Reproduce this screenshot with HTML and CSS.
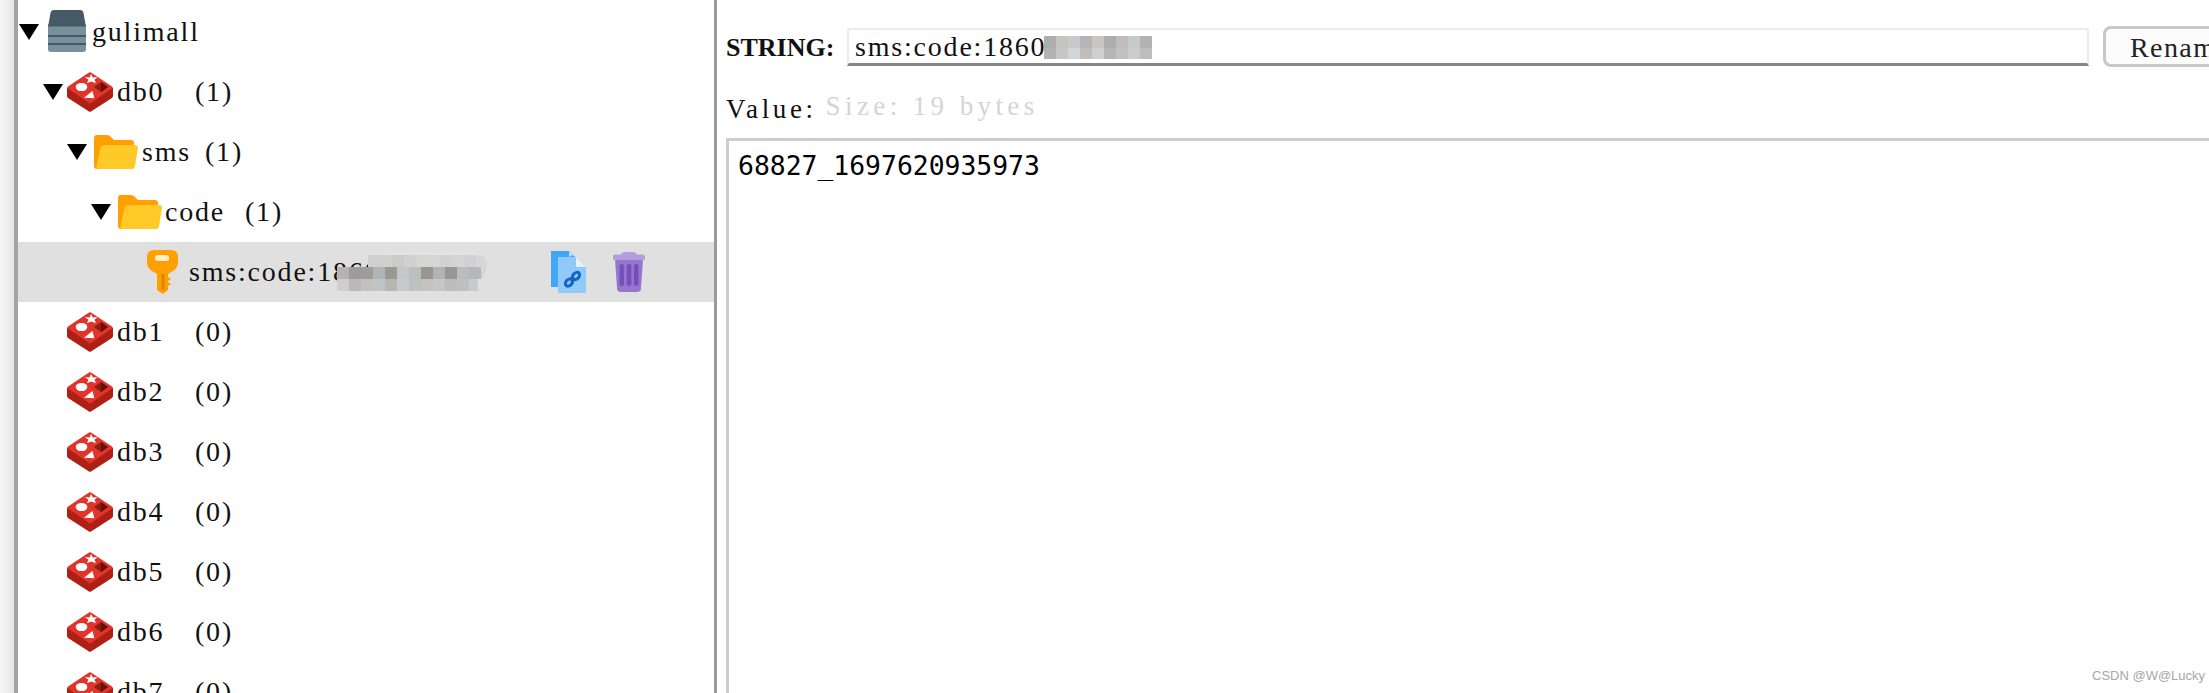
FILE: index.html
```html
<!DOCTYPE html>
<html lang="en">
<head>
<meta charset="utf-8">
<title>Redis key</title>
<link rel="stylesheet" href="styles.css">
</head>
<body>
<svg class="defs" width="0" height="0" aria-hidden="true">
  <symbol id="redis" viewBox="0 0 46 40">
    <path d="M0 16v8q0 1 1 2l21 13.600q1 .8 2 0l21-13.600q1-1 1-2v-8z" fill="#ae2015"/>
    <path d="M22 .5q1-.7 2 0l21 14q1.500 1 0 2l-21 14.500q-1 .7-2 0l-21-14.500q-1.500-1 0-2z" fill="#e0352b"/>
    <ellipse cx="14.500" cy="15" rx="5.800" ry="4.100" fill="#fff"/>
    <path d="M24 2l1.900 3.400 4.600-.4-3 2.700 1.400 3.500-4.700-1.700-4.300 1.700 1.500-3.500-3.400-2.700 4.600.4z" fill="#fff"/>
    <path d="M25.500 19l1.800 7.300-10.300-.6z" fill="#fff"/>
    <path d="M34 10l7 5-7 5-7-5z" fill="#8e1c12"/>
    <path d="M34 10l7 5-7 5z" fill="#6a100a"/>
  </symbol>
  <symbol id="folder" viewBox="0 0 44 34">
    <path d="M3 0h10q2 0 3.500 1.500l3.500 3.500h17q3 0 3 3v23q0 3-3 3h-34q-3 0-3-3v-28q0-3 3-3z" fill="#ffa000"/>
    <path d="M11 10h30q3 0 3 3l-3 18q-.5 3-3 3h-33q-3 0-2.500-3l4-18q.5-3 4.500-3z" fill="#ffca28"/>
  </symbol>
  <symbol id="stack" viewBox="0 0 38 42">
    <path d="M6 0h26q3 0 3.500 3l2.500 14v6h-38v-6l2.500-14q.5-3 3.500-3z" fill="#455a64"/>
    <path d="M0 15.500h38v23.500q0 3-3 3h-32q-3 0-3-3z" fill="#78909c"/>
    <path d="M0 15.500q0-1 1-1l36 0q1 0 1 1v1h-38z" fill="#455a64"/>
    <path d="M0 25h38v2h-38zM0 33h38v2h-38z" fill="#455a64"/>
  </symbol>
  <symbol id="key" viewBox="0 0 31 44">
    <path d="M7 0h17q7 0 7 7v5q0 6-5 9l-5 3v3l3 2-3 2v1l3 2-3 2v4l-5 4-6-4v-16l-5-3q-5-3-5-9v-5q0-7 7-7z" fill="#ffa000"/>
    <rect x="8" y="5" width="14" height="6" rx="2.500" fill="#ffeec8"/>
    <rect x="14.500" y="24" width="3" height="16" fill="#db8600"/>
  </symbol>
  <symbol id="file-link" viewBox="0 0 35 42">
    <path d="M0 0h18l7 7v29h-25z" fill="#42a5f5"/>
    <path d="M18 0l4 4-4 2z" fill="#bbdefb"/>
    <path d="M7 6h18l10 10v26h-28z" fill="#90caf9"/>
    <path d="M25 6l10 10h-10z" fill="#e3f2fd"/>
    <g fill="none" stroke="#1565c0" stroke-width="3">
      <ellipse cx="25" cy="25" rx="4.200" ry="3" transform="rotate(-45 25 25)"/>
      <ellipse cx="18" cy="31.500" rx="4.200" ry="3" transform="rotate(-45 18 31.500)"/>
      <path d="M19.500 30l4-3.500"/>
    </g>
  </symbol>
  <symbol id="trash" viewBox="0 0 32 40">
    <path d="M2 7h28l-2 29q0 4-4 4h-16q-4 0-4-4z" fill="#9575cd"/>
    <path d="M11 0h10q2 0 3 2.500h6q2 0 2 2v2.500q0 1-2 1h-28q-2 0-2-1v-2.500q0-2 2-2h6q1-2.500 3-2.500z" fill="#b39ddb"/>
    <g fill="#7450b8">
      <rect x="6.500" y="12" width="4.500" height="22" rx="2"/>
      <rect x="13.800" y="12" width="4.500" height="22" rx="2"/>
      <rect x="21" y="12" width="4.500" height="22" rx="2"/>
    </g>
  </symbol>
</svg>

<div class="app">
  <div class="gutter"></div>
  <nav class="tree">
    <div class="row">
      <span class="tri"></span>
      <svg class="ico ico-stack"><use href="#stack"/></svg>
      <span class="name name-conn">gulimall</span>
    </div>
    <div class="row lv1">
      <span class="tri"></span>
      <svg class="ico ico-redis"><use href="#redis"/></svg>
      <span class="name name-db">db0</span><span class="count">(1)</span>
    </div>
    <div class="row lv2">
      <span class="tri"></span>
      <svg class="ico ico-folder"><use href="#folder"/></svg>
      <span class="name name-sms">sms</span><span class="count">(1)</span>
    </div>
    <div class="row lv3">
      <span class="tri"></span>
      <svg class="ico ico-folder"><use href="#folder"/></svg>
      <span class="name name-code">code</span><span class="count">(1)</span>
    </div>
    <div class="row row-key">
      <svg class="ico ico-key"><use href="#key"/></svg>
      <span class="name name-key">sms:code:186000000</span>
      <svg class="mosaic mosaic-tree" width="152" height="40" viewBox="0 0 152 40">
        <path d="M31 3q60-9 103-3q16 4 16 18q0 8-5 12h-14v-15h-100z" fill="#e3e3e3"/>
        <path d="M139 3h2q9 1 9 10q0 8-5 14h-6z" fill="#d6d6d6"/>
        <g>
          <rect x="31" y="3" width="12" height="12" fill="#d0d0d0"/><rect x="43" y="3" width="12" height="12" fill="#d0d0d0"/><rect x="55" y="3" width="12" height="12" fill="#cbcbc9"/><rect x="67" y="3" width="12" height="12" fill="#d0d0d0"/><rect x="79" y="3" width="12" height="12" fill="#d5d5d3"/><rect x="91" y="3" width="12" height="12" fill="#d6d6d4"/><rect x="103" y="3" width="12" height="12" fill="#d2d2d0"/><rect x="115" y="3" width="12" height="12" fill="#d4d4d2"/><rect x="127" y="3" width="12" height="12" fill="#d1d1d1"/>
          <rect x="0" y="15" width="12" height="12" fill="#b6b2af"/><rect x="12" y="15" width="12" height="12" fill="#9c9c9c"/><rect x="24" y="15" width="12" height="12" fill="#a09c98"/><rect x="36" y="15" width="12" height="12" fill="#b0b5b5"/><rect x="48" y="15" width="12" height="12" fill="#9b9794"/><rect x="60" y="15" width="12" height="12" fill="#c4c7c6"/><rect x="72" y="15" width="12" height="12" fill="#bcbfbf"/><rect x="84" y="15" width="12" height="12" fill="#9b9491"/><rect x="96" y="15" width="12" height="12" fill="#afb5b5"/><rect x="108" y="15" width="12" height="12" fill="#9a9591"/><rect x="120" y="15" width="12" height="12" fill="#b9bdbf"/><rect x="132" y="15" width="12" height="12" fill="#b7b7b9"/>
          <rect x="0" y="27" width="12" height="12" fill="#d0cfcc"/><rect x="12" y="27" width="12" height="12" fill="#b9b9b9"/><rect x="24" y="27" width="12" height="12" fill="#c3c1bd"/><rect x="36" y="27" width="12" height="12" fill="#c1c4c4"/><rect x="48" y="27" width="12" height="12" fill="#b9b6b1"/><rect x="60" y="27" width="12" height="12" fill="#c6caca"/><rect x="72" y="27" width="12" height="12" fill="#bcc2c0"/><rect x="84" y="27" width="12" height="12" fill="#c5c3bf"/><rect x="96" y="27" width="12" height="12" fill="#c5c5c5"/><rect x="108" y="27" width="12" height="12" fill="#bbbcbc"/><rect x="120" y="27" width="12" height="12" fill="#bfbfbf"/><rect x="132" y="27" width="9" height="12" fill="#c8cbc9"/>
        </g>
      </svg>
      <svg class="ico ico-file"><use href="#file-link"/></svg>
      <svg class="ico ico-trash"><use href="#trash"/></svg>
    </div>
    <div class="row lv1 leaf"><svg class="ico ico-redis"><use href="#redis"/></svg><span class="name name-db">db1</span><span class="count">(0)</span></div>
    <div class="row lv1 leaf"><svg class="ico ico-redis"><use href="#redis"/></svg><span class="name name-db">db2</span><span class="count">(0)</span></div>
    <div class="row lv1 leaf"><svg class="ico ico-redis"><use href="#redis"/></svg><span class="name name-db">db3</span><span class="count">(0)</span></div>
    <div class="row lv1 leaf"><svg class="ico ico-redis"><use href="#redis"/></svg><span class="name name-db">db4</span><span class="count">(0)</span></div>
    <div class="row lv1 leaf"><svg class="ico ico-redis"><use href="#redis"/></svg><span class="name name-db">db5</span><span class="count">(0)</span></div>
    <div class="row lv1 leaf"><svg class="ico ico-redis"><use href="#redis"/></svg><span class="name name-db">db6</span><span class="count">(0)</span></div>
    <div class="row lv1 leaf"><svg class="ico ico-redis"><use href="#redis"/></svg><span class="name name-db">db7</span><span class="count">(0)</span></div>
  </nav>
  <main class="detail">
    <div class="key-bar">
      <span class="type-label">STRING:</span>
      <div class="key-input">
        <span>sms:code:18600000000</span>
        <svg class="mosaic mosaic-input" width="122" height="24" viewBox="0 0 122 24">
          <rect x="0" y="0" width="122" height="24" fill="#fff"/>
          <rect x="0" y="0" width="12" height="12" fill="#adadad"/><rect x="12" y="0" width="12" height="12" fill="#c7c4c0"/><rect x="24" y="0" width="12" height="12" fill="#c6cacb"/><rect x="36" y="0" width="12" height="12" fill="#b5b5b5"/><rect x="48" y="0" width="12" height="12" fill="#c9c6c2"/><rect x="60" y="0" width="12" height="12" fill="#adadad"/><rect x="72" y="0" width="12" height="12" fill="#bfbdbb"/><rect x="84" y="0" width="12" height="12" fill="#c5cacd"/><rect x="96" y="0" width="12" height="12" fill="#b3b3b3"/>
          <rect x="0" y="12" width="12" height="11" fill="#b3b3b3"/><rect x="12" y="12" width="12" height="11" fill="#c6c6c2"/><rect x="24" y="12" width="12" height="11" fill="#d0d6d8"/><rect x="36" y="12" width="12" height="11" fill="#c0beba"/><rect x="48" y="12" width="12" height="11" fill="#cfcfcf"/><rect x="60" y="12" width="12" height="11" fill="#b5b5b5"/><rect x="72" y="12" width="12" height="11" fill="#c3c1bd"/><rect x="84" y="12" width="12" height="11" fill="#c9cdcd"/><rect x="96" y="12" width="12" height="11" fill="#c0bcb9"/>
        </svg>
      </div>
      <button class="rename" type="button">Rename</button>
    </div>
    <div class="value-bar">
      <span class="value-label">Value:</span>
      <span class="size">Size: 19 bytes</span>
    </div>
    <div class="value-box">68827_1697620935973</div>
  </main>
</div>
<span class="watermark">CSDN @W@Lucky</span>
</body>
</html>
```

FILE: styles.css
```css
html, body {
  margin: 0;
  height: 693px;
  overflow: hidden;
  background: #fff;
}

body {
  position: relative;
  font-family: "Liberation Serif", serif;
  color: #111;
}

.defs {
  position: absolute;
}

.app {
  display: flex;
  height: 693px;
}

.gutter {
  flex: 0 0 14px;
  background: linear-gradient(to right, #f6f6f6, #e6e6e6);
}

.tree {
  flex: 0 0 703px;
  padding-top: 2px;
  box-sizing: border-box;
  height: 693px;
  overflow: hidden;
  border-left: 4px solid #a4a4a4;
  border-right: 3px solid #9a9a9a;
  font-size: 28px;
  letter-spacing: 1.8px;
}

.row {
  position: relative;
  display: flex;
  align-items: center;
  height: 60px;
  padding-left: 1px;
  white-space: nowrap;
}

.lv1 { padding-left: 25px; }
.lv2 { padding-left: 49px; }
.lv3 { padding-left: 73px; }
.leaf { padding-left: 49px; }

.row-key {
  padding-left: 129px;
  background: #e0e0e0;
}

.tri {
  flex: none;
  width: 0;
  height: 0;
  border-left: 10px solid transparent;
  border-right: 10px solid transparent;
  border-top: 16px solid #000;
}

.ico {
  flex: none;
  display: block;
}

.ico-stack {
  width: 38px;
  height: 42px;
  margin: -2px 6px 0 9px;
}

.ico-redis {
  width: 46px;
  height: 40px;
  margin-left: 4px;
  margin-right: 4px;
}

.leaf .ico-redis {
  margin-left: 0;
}

.ico-folder {
  width: 44px;
  height: 34px;
  margin-left: 7px;
  margin-right: 4px;
}

.lv3 .ico-folder {
  margin-right: 3px;
}

.ico-key {
  width: 31px;
  height: 44px;
  margin-right: 11px;
}

.ico-file {
  width: 35px;
  height: 42px;
}

.ico-trash {
  width: 32px;
  height: 40px;
  margin-left: 27px;
}

.name-db { width: 78px; }
.name-sms { width: 63px; }
.name-code { width: 80px; }

.name-key {
  width: 362px;
  flex: none;
}

.mosaic {
  position: absolute;
  display: block;
}

.mosaic-tree {
  left: 319px;
  top: 10px;
}

.detail {
  flex: 1;
  min-width: 0;
  padding: 26px 0 0 9px;
  overflow: hidden;
  font-size: 27px;
}

.key-bar {
  display: flex;
  align-items: center;
  height: 41px;
  white-space: nowrap;
}

.type-label {
  flex: 0 0 121px;
  padding-top: 2px;
  font-size: 26px;
  font-weight: bold;
}

.key-input {
  position: relative;
  flex: 0 0 1242px;
  box-sizing: border-box;
  height: 38px;
  padding-left: 6px;
  border: 2px solid #ececec;
  border-bottom: 3px solid #868686;
  line-height: 34px;
  font-size: 28px;
  letter-spacing: 1.8px;
}

.mosaic-input {
  left: 195px;
  top: 6px;
}

.rename {
  flex: 0 0 150px;
  height: 41px;
  margin-left: 14px;
  padding: 3px 0 0 24px;
  border: 3px solid #c8c8c8;
  border-radius: 8px;
  background: #fcfcfc;
  color: #222;
  font: 28px "Liberation Serif", serif;
  letter-spacing: 1.4px;
  text-align: left;
}

.value-bar {
  display: flex;
  align-items: center;
  gap: 9px;
  height: 71px;
  white-space: nowrap;
}

.value-label {
  padding-top: 14px;
  letter-spacing: 3.6px;
}

.size {
  padding-top: 8px;
  color: #d4d4d4;
  letter-spacing: 4.4px;
}

.value-box {
  box-sizing: border-box;
  height: 560px;
  padding: 8px 9px;
  border: 3px solid #cdcdcd;
  border-right: 0;
  border-bottom: 0;
  color: #000;
  font-family: "DejaVu Sans Mono", monospace;
  font-size: 26.4px;
  line-height: 34px;
}

.watermark {
  position: absolute;
  left: 2092px;
  top: 668px;
  color: #a6a6a6;
  font: 13px "Liberation Sans", sans-serif;
}
```
